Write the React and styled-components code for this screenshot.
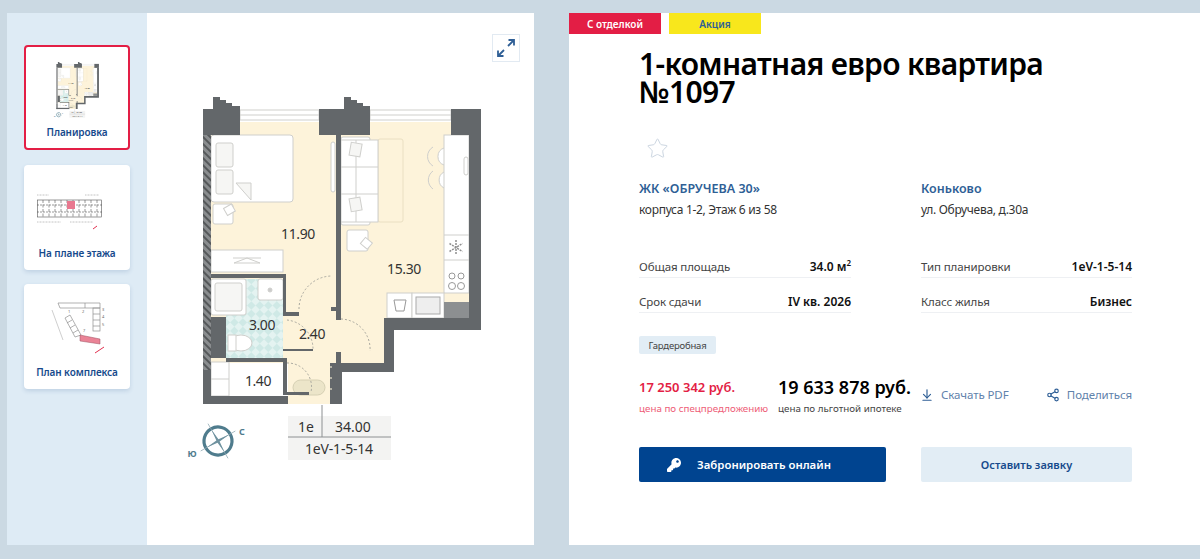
import React from "react";
import styled, { createGlobalStyle } from "styled-components";
import { ArrowDownToLine, Share2, Star } from "lucide-react";
import { FaKey } from "react-icons/fa";

const GlobalStyle = createGlobalStyle`
  html, body { margin: 0; padding: 0; }
  body {
    background: #cbd9e3;
    font-family: "Noto Sans", "Open Sans", sans-serif;
    color: #222;
    overflow: hidden;
  }
  * { box-sizing: border-box; }
`;

const WALL = "#63676a";
const CREAM = "#fdf3da";
const LINE = "#cfcfcc";

const Plan = ({ width, height }) => (
  <svg width={width} height={height} viewBox="180 92 320 375">
    <defs>
      <pattern id="tile" width="12" height="12" patternUnits="userSpaceOnUse" patternTransform="rotate(45)">
        <rect width="12" height="12" fill="#cfe9e6" />
        <rect width="6" height="6" fill="#e4f3f1" />
        <rect x="6" y="6" width="6" height="6" fill="#e4f3f1" />
      </pattern>
      <pattern id="hatch" width="5" height="5" patternUnits="userSpaceOnUse" patternTransform="rotate(-45)">
        <rect width="5" height="5" fill="#8a8d8f" />
        <rect width="2" height="5" fill="#55585a" />
      </pattern>
    </defs>

    {/* floor */}
    <path d="M210 122H468V318H385V366H335V396H287V404H329V363H210Z" fill={CREAM} />
    <rect x="287" y="362" width="42" height="38" fill={CREAM} />
    <rect x="225" y="279" width="57" height="79" fill="url(#tile)" />

    {/* windows */}
    <g fill="#fff" stroke={LINE} strokeWidth="1">
      <rect x="239" y="110" width="79" height="10" />
      <rect x="369" y="110" width="81" height="10" />
    </g>
    <path d="M239 115H318M369 115H450" stroke={LINE} />

    {/* bedroom */}
    <g fill="#fff" stroke={LINE} strokeWidth="1">
      <rect x="210" y="135" width="82" height="67" rx="3" />
      <rect x="215" y="143" width="17" height="24" rx="2" fill="#f6f6f4" />
      <rect x="215" y="170" width="17" height="24" rx="2" fill="#f6f6f4" />
      <path d="M235 183H250V200Z" fill="#f6f6f4" />
      <rect x="212" y="204" width="20" height="20" rx="2" />
      <rect x="224" y="206" width="9" height="8" transform="rotate(-30 228 210)" />
      <rect x="330" y="142" width="4" height="50" rx="2" />
      <rect x="210" y="250" width="72" height="22" />
      <path d="M233 263L246 258L259 263Z M232 258H260" fill="none" />
    </g>

    {/* living room */}
    <g fill="#fff" stroke={LINE} strokeWidth="1">
      <rect x="377" y="139" width="25" height="83" rx="2" fill="none" stroke="#eadfc2" />
      <rect x="340" y="137" width="29" height="5" rx="2" />
      <rect x="340" y="220" width="29" height="5" rx="2" />
      <rect x="340" y="140" width="37" height="82" />
      <path d="M340 167H377M340 194H377M355 140V222" />
      <rect x="349" y="143" width="11" height="13" transform="rotate(10 354 150)" fill="#f6f6f4" />
      <rect x="349" y="198" width="11" height="13" transform="rotate(-10 354 204)" fill="#f6f6f4" />
      <rect x="346" y="230" width="21" height="21" rx="2" />
      <rect x="361" y="239" width="9" height="8" transform="rotate(40 365 243)" />
    </g>

    {/* kitchen */}
    <g fill="#fff" stroke={LINE} strokeWidth="1">
      <path d="M443 148A9 9 0 0 0 443 165M443 172A9 9 0 0 0 443 188" />
      <path d="M432 147A11 11 0 0 0 432 166M432 171A11 11 0 0 0 432 189" fill="none" />
      <rect x="443" y="135" width="25" height="158" />
      <path d="M443 235H468M443 260H468" />
      <rect x="463" y="157" width="4" height="18" rx="2" />
      <rect x="386" y="293" width="25" height="25" />
      <rect x="411" y="293" width="32" height="25" />
      <rect x="415" y="297" width="24" height="17" fill="#eee" stroke="#aaa" />
      <path d="M393 300H405L403 311H395Z" stroke="#999" />
      <circle cx="451" cy="276" r="3" fill="none" stroke="#999" />
      <circle cx="460" cy="276" r="3" fill="none" stroke="#999" />
      <circle cx="451" cy="286" r="3.5" fill="none" stroke="#999" />
      <circle cx="460" cy="286" r="3.5" fill="none" stroke="#999" />
    </g>
    <path d="M455 240V255M448.5 243.5L461.5 251.5M448.5 251.5L461.5 243.5" stroke="#8f8f8f" strokeWidth="1.5" strokeDasharray="2 1" />
    <rect x="443" y="302" width="25" height="16" fill="#8c8f91" />

    {/* bath and wardrobe */}
    <g fill="#fff" stroke={LINE} strokeWidth="1">
      <rect x="210" y="279" width="35" height="36" rx="2" />
      <rect x="214" y="283" width="27" height="28" rx="2" fill="#f6f6f4" />
      <rect x="257" y="279" width="25" height="21" rx="2" />
      <circle cx="269" cy="290" r="2" fill="#ccc" />
      <ellipse cx="240" cy="343" rx="11" ry="8" />
      <rect x="227" y="335" width="8" height="16" />
      <rect x="210" y="362" width="18" height="34" />
      <path d="M210 379H228" />
    </g>
    <rect x="292" y="380" width="32" height="15" rx="7.5" fill="#ece5c9" stroke="#d6d0b4" />

    {/* walls */}
    <g fill={WALL}>
      <path d="M202 109H212V97H219V100H225V103H231V106H239V135H202Z" />
      <path d="M318 109H343V97H350V100H356V103H362V106H369V135H318Z" />
      <rect x="450" y="109" width="30" height="26" />
      <path d="M468 135H480V330H393V372H341V404H329V363H383V318H468Z" />
      <rect x="335" y="135" width="5" height="185" />
      <rect x="335" y="352" width="5" height="12" />
      <rect x="330" y="307" width="6" height="4" />
      <path d="M210 274H285V312H298V316H282V278H210Z" />
      <rect x="225" y="358" width="60" height="4" />
      <rect x="282" y="349" width="30" height="2" />
      <rect x="282" y="358" width="4" height="37" />
      <rect x="286" y="392" width="22" height="3" />
      <rect x="210" y="317" width="15" height="41" />
      <rect x="202" y="370" width="8" height="34" />
      <rect x="202" y="396" width="85" height="8" />
    </g>
    <rect x="202" y="135" width="8" height="235" fill="url(#hatch)" />
    <path d="M330 366V392" stroke="#b5b3a6" strokeWidth="2" strokeDasharray="2 9" />

    {/* doors */}
    <g fill="none" stroke="#a9a89f" strokeDasharray="2 2">
      <path d="M298 309A33 33 0 0 1 331 276" />
      <path d="M286 320A29 29 0 0 1 312 349" />
      <path d="M340 319A30 30 0 0 1 369 351" />
      <path d="M286 363A24 24 0 0 1 310 392" />
    </g>

    <g fontFamily="Noto Sans, sans-serif" fontSize="14" fill="#333" textAnchor="middle" letterSpacing="-0.4">
      <text x="297" y="239">11.90</text>
      <text x="403" y="274">15.30</text>
      <text x="261" y="330">3.00</text>
      <text x="311" y="339">2.40</text>
      <text x="257" y="386">1.40</text>
    </g>

    {/* label */}
    <rect x="287" y="416" width="103" height="44" fill="#f3f3f2" />
    <path d="M321 405V437M287 437H390" stroke="#8d9092" fill="none" />
    <g fontFamily="Noto Sans, sans-serif" fontSize="14" fill="#333" textAnchor="middle">
      <text x="305" y="432">1e</text>
      <text x="352" y="432">34.00</text>
      <text x="338" y="454" letterSpacing="-0.2">1eV-1-5-14</text>
    </g>

    {/* compass */}
    <g transform="rotate(-30 217 441)">
      <circle cx="217" cy="441" r="14" stroke="#4f7c8d" strokeWidth="3.2" fill="none" />
      <path d="M217 421V461M197 441H237" stroke="#8fa8b2" strokeWidth="0.7" />
      <path d="M217 428L218.2 439.8L230 441L218.2 442.2L217 454L215.8 442.2L204 441L215.8 439.8Z" fill="#6f929f" />
    </g>
    <g fontFamily="Noto Sans, sans-serif" fontSize="9" fontWeight="700" fill="#4f7c8d" textAnchor="middle">
      <text x="241" y="435">С</text>
      <text x="191" y="457">Ю</text>
    </g>
  </svg>
);

const FloorThumb = () => (
  <svg width="80" height="38" viewBox="0 0 80 38">
    <g fill="none" stroke="#555" strokeWidth="0.6">
      <rect x="0.5" y="7" width="64" height="17" />
      <path d="M0 12H65M0 19H65" strokeDasharray="2 1" />
      <path d="M6 7V24M12 7V24M18 7V24M24 7V24M30 7V24M36 7V24M42 7V24M48 7V24M54 7V24M60 7V24" strokeDasharray="3 1.5" />
    </g>
    <rect x="30" y="8" width="8" height="8" fill="#e8788f" />
    <path d="M0 2H12M48 2H62M0 29H24M33 29H56" stroke="#c4c4c4" strokeDasharray="1 0.5" />
    <path d="M56 36L60 33" stroke="#e2304f" />
  </svg>
);

const ComplexThumb = () => (
  <svg width="60" height="60" viewBox="0 0 60 60">
    <g fill="none" stroke="#8f8f8f" strokeWidth="0.7">
      <path d="M11 1H53V6H13Z" />
      <path d="M38 1V6" />
      <rect x="46" y="6" width="7" height="23" />
      <path d="M46 12H53M46 18H53M46 24H53" />
      <path d="M18 16L23 13L34 33L28 35Z" />
      <path d="M20 21L25 18M23 26L28 23M26 31L31 28" />
    </g>
    <path d="M33 33L53 37V42L33 39Z" fill="#ea8396" stroke="#9a5060" strokeWidth="0.5" />
    <path d="M5 8L16 38" stroke="#cfcfcf" />
    <path d="M48 51L57 45" stroke="#e2304f" />
    <g fontFamily="Noto Sans, sans-serif" fontSize="4" fill="#666">
      <text x="21" y="11">1</text>
      <text x="35" y="11">2</text>
      <text x="55" y="9">3</text>
      <text x="55" y="16">4</text>
      <text x="55" y="24">5</text>
      <text x="36" y="30">7</text>
    </g>
  </svg>
);

const thumbs = [
  { title: "Планировка", active: true, art: <Plan width={49} height={58} />, top: 14 },
  { title: "На плане этажа", art: <FloorThumb />, top: 28 },
  { title: "План комплекса", art: <ComplexThumb />, top: 18 },
];

export default function App() {
  return (
    <>
      <GlobalStyle />
      <Page>
        <Gallery>
          <Sidebar>
            {thumbs.map((t) => (
              <Thumb key={t.title} $active={t.active}>
                <ThumbArt $top={t.top}>{t.art}</ThumbArt>
                <ThumbTitle>{t.title}</ThumbTitle>
              </Thumb>
            ))}
          </Sidebar>
          <Stage>
            <ExpandButton>
              <svg width="20" height="20" viewBox="0 0 20 20" fill="none" stroke="#2f5f96" strokeWidth="1.8">
                <path d="M12 8L18 2M12.5 2H18V7.5M8 12L2 18M2 12.5V18H7.5" />
              </svg>
            </ExpandButton>
            <Plan width={320} height={375} />
          </Stage>
        </Gallery>

        <Info>
          <Tags>
            <Tag $bg="#e31e45" $color="#fff">С отделкой</Tag>
            <Tag $bg="#f8e71c" $color="#2f5f96">Акция</Tag>
          </Tags>
          <Body>
            <Title>1-комнатная евро квартира<br />№1097</Title>
            <FavStar>
              <Star size={23} strokeWidth={1} color="#c9d3df" />
            </FavStar>
            <Columns>
              <div>
                <Place>ЖК «ОБРУЧЕВА 30»</Place>
                <Sub>корпуса 1-2, Этаж 6 из 58</Sub>
              </div>
              <div>
                <Place>Коньково</Place>
                <Sub>ул. Обручева, д.30а</Sub>
              </div>
            </Columns>
            <Specs>
              <Row><Label>Общая площадь</Label><Value>34.0 м<sup>2</sup></Value></Row>
              <Row><Label>Тип планировки</Label><Value>1eV-1-5-14</Value></Row>
              <Row><Label>Срок сдачи</Label><Value>IV кв. 2026</Value></Row>
              <Row><Label>Класс жилья</Label><Value>Бизнес</Value></Row>
            </Specs>
            <Chip>Гардеробная</Chip>
            <PriceRow>
              <Price>
                <SpecialAmount>17 250 342 руб.</SpecialAmount>
                <SpecialNote>цена по спецпредложению</SpecialNote>
              </Price>
              <Price>
                <MainAmount>19 633 878 руб.</MainAmount>
                <MainNote>цена по льготной ипотеке</MainNote>
              </Price>
              <Links>
                <ActionLink><ArrowDownToLine size={14} color="#2f5f96" />Скачать PDF</ActionLink>
                <ActionLink><Share2 size={14} color="#2f5f96" />Поделиться</ActionLink>
              </Links>
            </PriceRow>
            <Buttons>
              <PrimaryButton><FaKey size={14} />Забронировать онлайн</PrimaryButton>
              <SecondaryButton>Оставить заявку</SecondaryButton>
            </Buttons>
          </Body>
        </Info>
      </Page>
    </>
  );
}

const Page = styled.div`
  display: flex;
  gap: 35px;
  height: 559px;
  padding: 13px 0 14px 7px;
`;

const Gallery = styled.section`
  display: flex;
  width: 527px;
  flex-shrink: 0;
`;

const Sidebar = styled.div`
  width: 140px;
  padding: 32px 17px 0;
  background: #deebf5;
  display: flex;
  flex-direction: column;
  gap: 14.5px;
`;

const Thumb = styled.div`
  height: 105px;
  background: #fff;
  border-radius: 4px;
  border: ${(p) => (p.$active ? "2px solid #e31e45" : "none")};
  box-shadow: ${(p) => (p.$active ? "none" : "0 2px 4px rgba(70, 110, 160, 0.2)")};
  display: flex;
  flex-direction: column;
  align-items: center;
  justify-content: space-between;
  padding-bottom: ${(p) => (p.$active ? "9px" : "10px")};
`;

const ThumbArt = styled.div`
  padding-top: ${(p) => p.$top}px;
  display: flex;
  justify-content: center;
`;

const ThumbTitle = styled.div`
  font-size: 10px;
  letter-spacing: -0.1px;
  font-weight: 600;
  color: #164a8c;
  white-space: nowrap;
`;

const Stage = styled.div`
  position: relative;
  flex: 1;
  background: #fff;
  padding-top: 79px;
  display: flex;
  justify-content: center;
  align-items: flex-start;
`;

const ExpandButton = styled.div`
  position: absolute;
  top: 21px;
  right: 14px;
  width: 28px;
  height: 28px;
  border: 1px solid #e2eaf2;
  display: flex;
  align-items: center;
  justify-content: center;
`;

const Info = styled.section`
  flex: 1;
  background: #fff;
`;

const Tags = styled.div`
  display: flex;
  gap: 8px;
`;

const Tag = styled.div`
  width: 92px;
  height: 21px;
  background: ${(p) => p.$bg};
  color: ${(p) => p.$color};
  font-size: 10px;
  font-weight: 600;
  display: flex;
  align-items: center;
  justify-content: center;
`;

const Body = styled.div`
  padding: 16px 68px 0 70px;
`;

const Title = styled.h1`
  margin: 0;
  font-size: 30px;
  letter-spacing: -0.66px;
  line-height: 28px;
  font-weight: 600;
  color: #000;
  white-space: nowrap;
`;

const FavStar = styled.div`
  height: 23px;
  margin: 31px 0 0 7px;
`;

const Columns = styled.div`
  display: grid;
  grid-template-columns: 212px 211px;
  column-gap: 70px;
  margin-top: 20px;
`;

const Place = styled.div`
  font-size: 12.5px;
  line-height: 17px;
  font-weight: 600;
  color: #2f5f96;
`;

const Sub = styled.div`
  font-size: 12px;
  letter-spacing: -0.3px;
  line-height: 17px;
  margin-top: 4px;
  color: #333;
`;

const Specs = styled.div`
  display: grid;
  grid-template-columns: 212px 211px;
  column-gap: 70px;
  margin-top: 25px;
`;

const Row = styled.div`
  height: 35px;
  border-bottom: 1px solid #eef0f3;
  display: flex;
  justify-content: space-between;
  align-items: center;
  padding-top: 13px;
`;

const Label = styled.span`
  font-size: 11.5px;
  letter-spacing: -0.1px;
  color: #444;
`;

const Value = styled.span`
  font-size: 12px;
  font-weight: 600;
  color: #111;
  sup {
    font-size: 8px;
    line-height: 0;
  }
`;

const Chip = styled.div`
  display: inline-flex;
  align-items: center;
  justify-content: center;
  width: 77px;
  height: 18px;
  margin-top: 23px;
  background: #e2edf5;
  border-radius: 2px;
  font-size: 9.5px;
  letter-spacing: -0.2px;
  color: #444;
`;

const PriceRow = styled.div`
  display: flex;
  align-items: flex-start;
  margin-top: 22px;
`;

const Price = styled.div`
  display: flex;
  flex-direction: column;
  margin-right: 10px;
  &:first-child {
    width: 129px;
  }
  &:nth-child(2) {
    width: 132px;
  }
`;

const SpecialAmount = styled.div`
  font-size: 13px;
  font-weight: 600;
  line-height: 22px;
  color: #e31e45;
  white-space: nowrap;
`;

const MainAmount = styled.div`
  font-size: 18px;
  font-weight: 600;
  line-height: 22px;
  color: #000;
  white-space: nowrap;
`;

const SpecialNote = styled.div`
  margin-top: 4px;
  font-size: 9.8px;
  color: #ee5d77;
  white-space: nowrap;
`;

const MainNote = styled(SpecialNote)`
  color: #444;
`;

const Links = styled.div`
  flex: 1;
  display: flex;
  justify-content: space-between;
  padding-top: 12px;
`;

const ActionLink = styled.div`
  display: flex;
  align-items: center;
  gap: 7px;
  font-size: 11.5px;
  letter-spacing: -0.1px;
  line-height: 14px;
  color: #5f82ab;
  white-space: nowrap;
`;

const Buttons = styled.div`
  display: grid;
  grid-template-columns: 247px 211px;
  column-gap: 35px;
  margin-top: 32px;
`;

const PrimaryButton = styled.div`
  height: 35px;
  background: #004490;
  border-radius: 2px;
  color: #fff;
  font-size: 11.4px;
  font-weight: 600;
  display: flex;
  align-items: center;
  gap: 16px;
  padding-left: 28px;
`;

const SecondaryButton = styled.div`
  height: 35px;
  background: #e2edf5;
  border-radius: 2px;
  color: #164a8c;
  font-size: 11px;
  font-weight: 600;
  display: flex;
  align-items: center;
  justify-content: center;
`;
